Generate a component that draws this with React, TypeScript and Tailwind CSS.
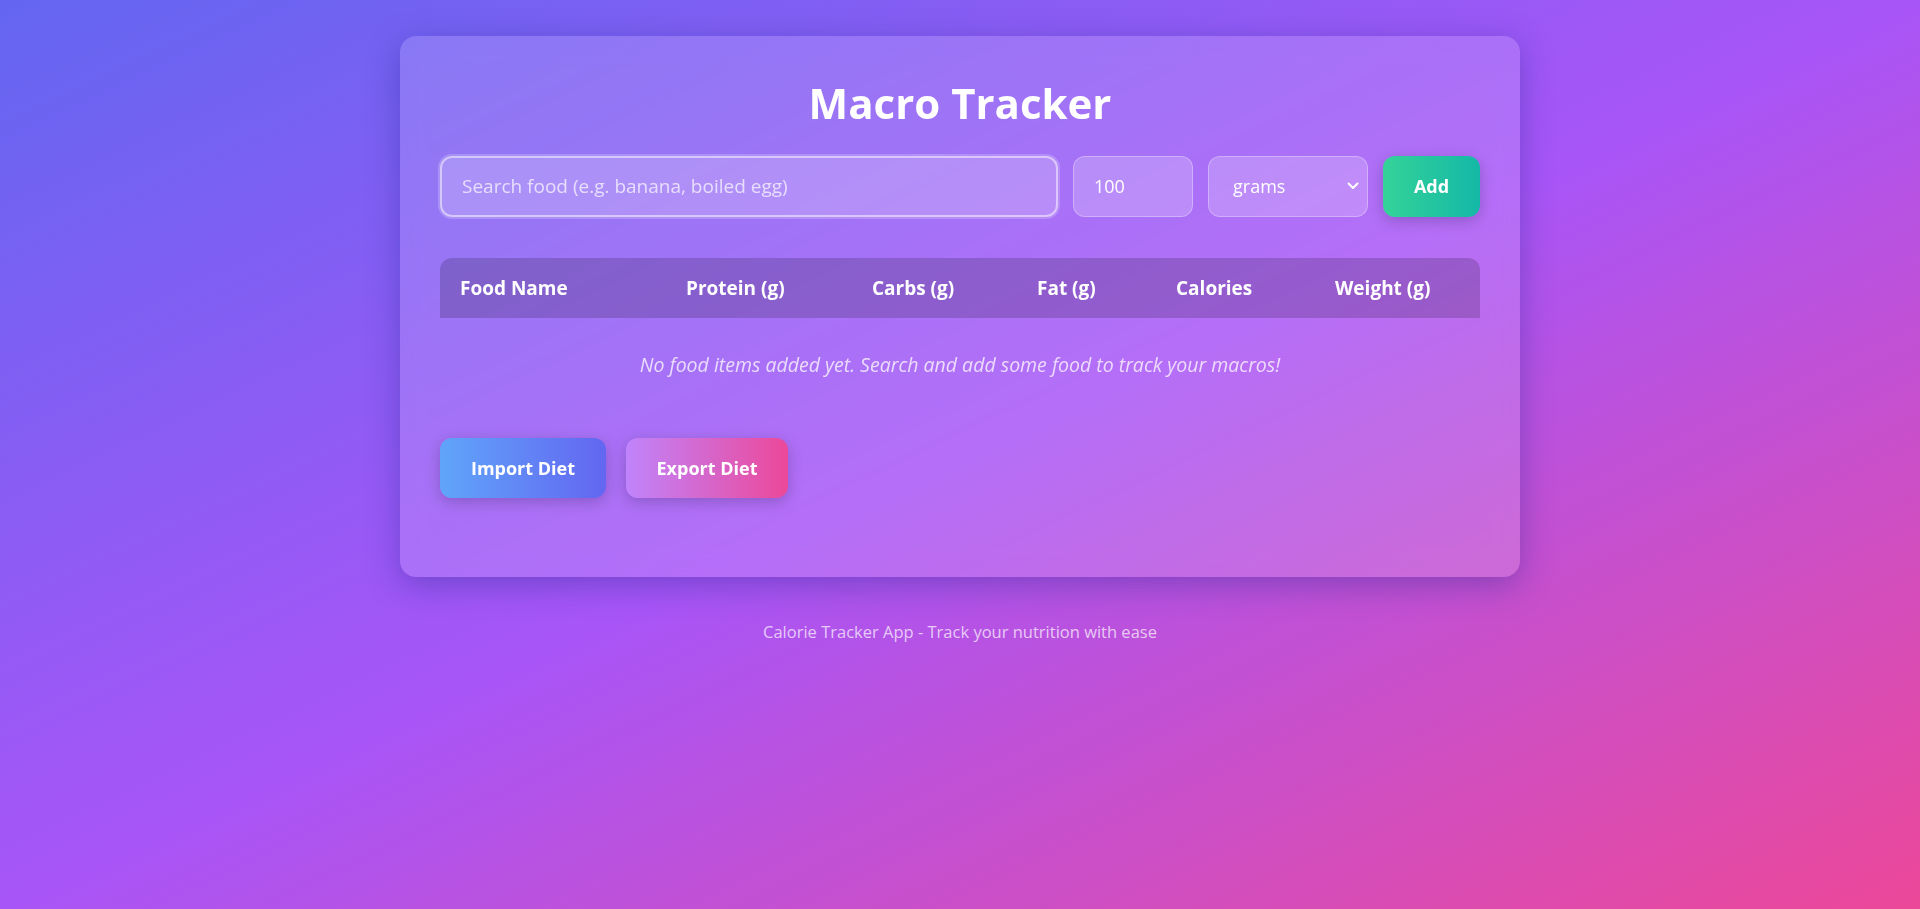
import React, { useState } from 'react';

interface FoodItem {
  id: string;
  name: string;
  protein: number;
  carbs: number;
  fat: number;
  calories: number;
  weight: number;
}

const columns = [
  { label: 'Food Name', width: 'w-[226px]' },
  { label: 'Protein (g)', width: 'w-[186px]' },
  { label: 'Carbs (g)', width: 'w-[165px]' },
  { label: 'Fat (g)', width: 'w-[139px]' },
  { label: 'Calories', width: 'w-[159px]' },
  { label: 'Weight (g)', width: 'w-[165px]' },
];

const App: React.FC = () => {
  const [query, setQuery] = useState('');
  const [amount, setAmount] = useState('100');
  const [unit, setUnit] = useState('grams');
  const [items] = useState<FoodItem[]>([]);

  return (
    <div className="min-h-screen bg-[linear-gradient(to_bottom_right,#6366f1,#a855f7,#ec4899)] font-['Open_Sans',sans-serif] text-white pt-[36px]">
      {/* Card */}
      <div className="mx-auto w-[1120px] rounded-[16px] bg-white/15 backdrop-blur-md shadow-[0_8px_32px_rgba(31,38,135,0.37)] px-[40px] pt-[42px] pb-[79px]">
        <h1 className="text-center text-[42px] leading-[50px] font-bold mb-[28px]">Macro Tracker</h1>

        {/* Search row */}
        <div className="flex gap-[15px] h-[61px]">
          <input
            className="flex-1 rounded-[12px] bg-white/20 border-2 border-white/50 ring-2 ring-white/20 px-[20px] text-[18px] text-white placeholder:text-white/70 placeholder:text-[19px] outline-none"
            placeholder="Search food (e.g. banana, boiled egg)"
            value={query}
            onChange={e => setQuery(e.target.value)}
          />
          <input
            className="w-[120px] rounded-[12px] bg-white/20 border border-white/30 px-[20px] text-[18px] text-white outline-none"
            value={amount}
            onChange={e => setAmount(e.target.value)}
          />
          <div className="relative w-[160px]">
            <select
              className="appearance-none w-full h-full rounded-[12px] bg-white/20 border border-white/30 pl-[24px] pr-[30px] text-[18px] text-white outline-none"
              value={unit}
              onChange={e => setUnit(e.target.value)}
            >
              <option className="text-black" value="grams">grams</option>
              <option className="text-black" value="pieces">pieces</option>
            </select>
            <svg className="pointer-events-none absolute right-[9px] top-[26px]" width="12" height="8" viewBox="0 0 12 8" fill="none">
              <path d="M1.5 1.5L6 6L10.5 1.5" stroke="white" strokeWidth="2" strokeLinecap="round" strokeLinejoin="round" />
            </svg>
          </div>
          <button className="w-[97px] rounded-[12px] bg-[linear-gradient(to_right,#34d399,#14b8a6)] shadow-[0_4px_15px_rgba(0,0,0,0.2)] text-[18px] font-bold text-white">
            Add
          </button>
        </div>

        {/* Table */}
        <table className="mt-[41px] w-full border-collapse text-left">
          <thead>
            <tr className="bg-black/[0.17]">
              {columns.map((c, i) => (
                <th
                  key={c.label}
                  className={`${c.width} h-[60px] px-[20px] text-[19px] font-bold ${i === 0 ? 'rounded-tl-[12px]' : ''} ${i === columns.length - 1 ? 'rounded-tr-[12px]' : ''}`}
                >
                  {c.label}
                </th>
              ))}
            </tr>
          </thead>
          <tbody>
            {items.length === 0 && (
              <tr>
                <td colSpan={6} className="py-[33px] text-center text-[19.5px] leading-[28px] italic text-white/75">
                  No food items added yet. Search and add some food to track your macros!
                </td>
              </tr>
            )}
          </tbody>
        </table>

        {/* Import / Export */}
        <div className="flex gap-[20px] mt-[26px]">
          <button className="w-[166px] h-[60px] rounded-[12px] bg-[linear-gradient(to_right,#60a5fa,#6366f1)] shadow-[0_4px_15px_rgba(0,0,0,0.2)] text-[18px] font-bold text-white">
            Import Diet
          </button>
          <button className="w-[162px] h-[60px] rounded-[12px] bg-[linear-gradient(to_right,#c084fc,#ec4899)] shadow-[0_4px_15px_rgba(0,0,0,0.2)] text-[18px] font-bold text-white">
            Export Diet
          </button>
        </div>
      </div>

      <p className="mt-[43px] text-center text-[16.5px] leading-[24px] text-white/70">
        Calorie Tracker App - Track your nutrition with ease
      </p>
    </div>
  );
};

export default App;
